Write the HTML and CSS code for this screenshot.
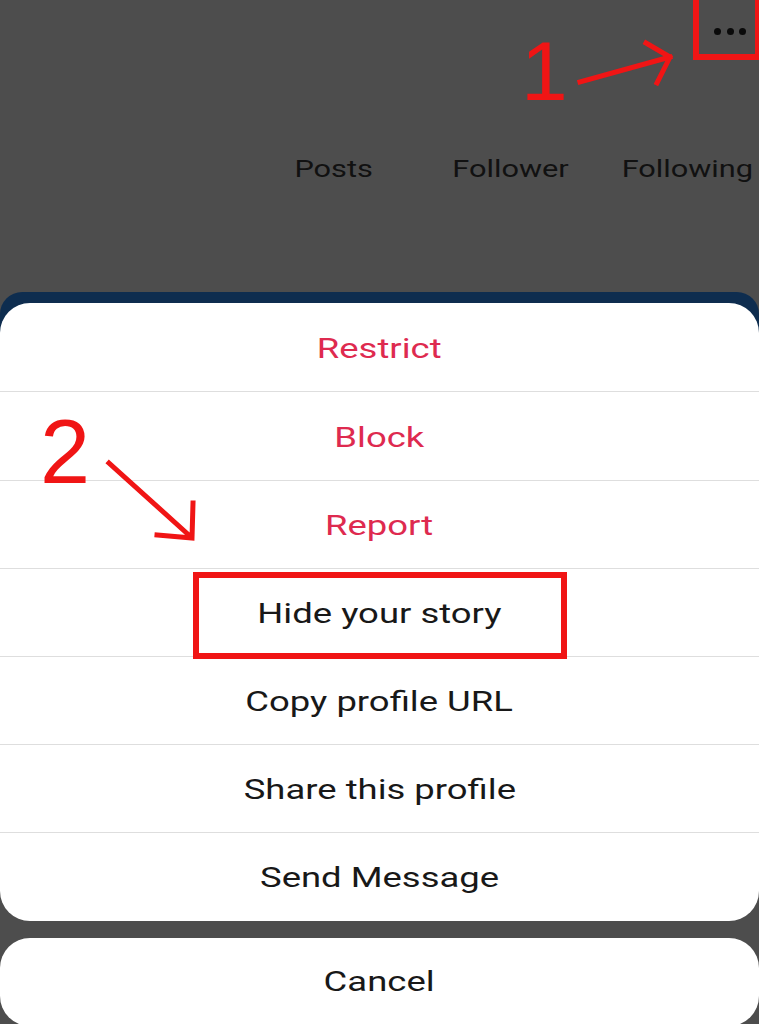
FILE: index.html
```html
<!DOCTYPE html>
<html lang="en">
<head>
    <meta charset="UTF-8">
    <meta name="viewport" content="width=device-width, initial-scale=1.0">
    <title>Hide your story</title>
    <link rel="stylesheet" href="styles.css">
</head>
<body>
    <div class="screen">
        <header class="profile">
            <div class="topbar">
                <button class="more" aria-label="More options">
                    <span></span><span></span><span></span>
                </button>
            </div>
            <div class="stats">
                <div class="stat"><span class="label">Posts</span></div>
                <div class="stat"><span class="label">Follower</span></div>
                <div class="stat"><span class="label">Following</span></div>
            </div>
        </header>

        <section class="sheet-wrap">
            <ul class="sheet">
                <li class="danger"><span class="label">Restrict</span></li>
                <li class="danger"><span class="label">Block</span></li>
                <li class="danger"><span class="label">Report</span></li>
                <li><span class="label">Hide your story</span></li>
                <li><span class="label">Copy profile URL</span></li>
                <li><span class="label">Share this profile</span></li>
                <li><span class="label">Send Message</span></li>
            </ul>
            <div class="cancel"><span class="label">Cancel</span></div>
        </section>

        <!-- annotation layer -->
        <svg class="notes" width="759" height="1024" viewBox="0 0 759 1024">
            <rect x="696" y="-4" width="62" height="61" />
            <text x="521" y="100" class="num n1">1</text>
            <path d="M580 82 L670 57 M646 43 L670 57 L657 83" />
            <text x="40" y="483" class="num n2">2</text>
            <path d="M109 463 L191 537 M193 503 L192 538 L157 535" />
            <rect x="196" y="575" width="368" height="81" class="box" />
        </svg>
    </div>
</body>
</html>
```

FILE: styles.css
```css
:root {
    --backdrop: #4d4d4d;
    --peek: #0e2d4f;
    --sheet-bg: #ffffff;
    --text-color: #181818;
    --danger: #de2a4f;
    --divider: #dedede;
    --note: #f01515;
}

* {
    margin: 0;
    padding: 0;
    box-sizing: border-box;
}

body {
    background-color: var(--backdrop);
    font-family: Roboto, "Noto Sans", Arial, sans-serif;
    color: var(--text-color);
}

.screen {
    position: relative;
    width: 759px;
    height: 1024px;
    overflow: hidden;
}

.profile {
    height: 292px;
}

.topbar {
    height: 62px;
    display: flex;
    justify-content: flex-end;
    align-items: center;
    padding-right: 13px;
}

.more {
    display: flex;
    gap: 5.5px;
    background: none;
    border: none;
}

.more span {
    width: 7px;
    height: 7px;
    border-radius: 50%;
    background-color: #0a0a0a;
}

.stats {
    display: grid;
    grid-template-columns: repeat(3, 177px);
    padding-left: 245px;
    margin-top: 91px;
    line-height: 32px;
    font-size: 24px;
    color: #111111;
}

.stat {
    text-align: center;
    white-space: nowrap;
}

.stat .label {
    display: inline-block;
    transform: scaleX(1.28);
}

.sheet-wrap {
    background: linear-gradient(var(--peek) 0 40px, transparent 40px);
    border-radius: 22px 22px 0 0;
    padding-top: 11px;
}

.sheet {
    list-style: none;
    background-color: var(--sheet-bg);
    border-radius: 30px;
    overflow: hidden;
    padding-bottom: 1px;
}

.sheet li,
.cancel {
    height: 88px;
    display: flex;
    align-items: center;
    justify-content: center;
    font-size: 27px;
    white-space: nowrap;
}

.sheet li {
    padding-top: 3px;
}

.sheet li:nth-child(2) {
    height: 89px;
}

.sheet li + li {
    border-top: 1px solid var(--divider);
}

.sheet li .label,
.cancel .label {
    display: inline-block;
    transform: scaleX(1.35);
}

.sheet li.danger {
    color: var(--danger);
}

.cancel {
    margin-top: 17px;
    background-color: var(--sheet-bg);
    border-radius: 30px;
}

.notes {
    position: absolute;
    top: 0;
    left: 0;
    pointer-events: none;
    fill: none;
    stroke: var(--note);
    stroke-width: 6;
}

.notes path {
    stroke-width: 5;
    stroke-linecap: square;
    stroke-linejoin: miter;
}

.notes .num {
    fill: var(--note);
    stroke: none;
    font-family: "Liberation Sans", Arial, sans-serif;
}

.notes .n1 {
    font-size: 84px;
}

.notes .n2 {
    font-size: 90px;
}
```
